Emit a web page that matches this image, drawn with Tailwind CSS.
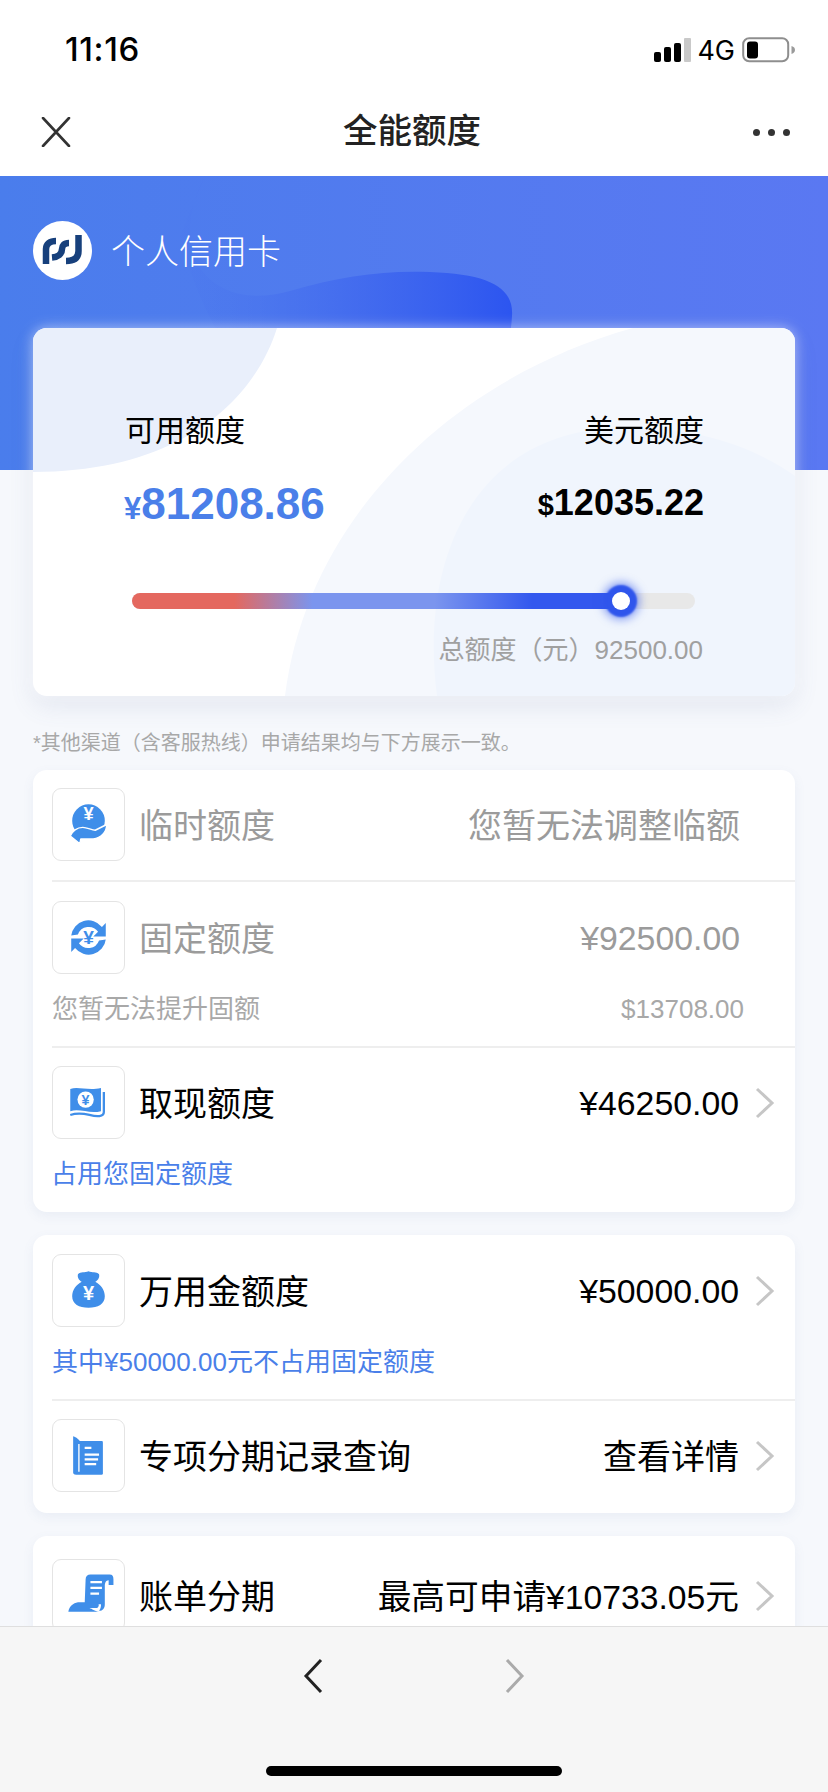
<!DOCTYPE html>
<html lang="zh-CN">
<head>
    <meta charset="UTF-8">
    <meta name="viewport" content="width=device-width, initial-scale=1.0">
    <title>全能额度</title>
    <script src="https://cdn.jsdelivr.net/npm/@tailwindcss/browser@4"></script>
</head>
<body class="bg-[#f6f8fc]">
<div class="relative w-[828px] h-[1792px] overflow-hidden bg-[#f6f8fc] text-[#111] font-['Liberation_Sans','Noto_Sans_CJK_SC',sans-serif]">

    <!-- status bar -->
    <div class="h-[88px] bg-white flex items-center justify-between pl-[65px] pr-[32px] pt-[12px]">
        <span class="text-[33px] font-medium tracking-[0.6px] text-black font-['Inter',sans-serif]">11:16</span>
        <div class="flex items-center">
            <svg width="37" height="24" viewBox="0 0 37 24" class="mr-[6px]">
                <rect x="0" y="14" width="7" height="10" rx="2" fill="#000"/>
                <rect x="10" y="9" width="7" height="15" rx="2" fill="#000"/>
                <rect x="20" y="5" width="7" height="19" rx="2" fill="#000"/>
                <rect x="30" y="0" width="7" height="24" rx="1" fill="#c9c9c9"/>
            </svg>
            <span class="text-[27px] leading-none text-black mr-[7px] font-['Inter',sans-serif]">4G</span>
            <svg width="54" height="26" viewBox="0 0 54 26">
                <rect x="1.2" y="1.2" width="45" height="23" rx="6" fill="none" stroke="#8e8e8e" stroke-width="2"/>
                <rect x="5" y="4.5" width="11" height="17" rx="3" fill="#000"/>
                <path d="M49.5 9c2.5.8 3.5 2.2 3.5 4s-1 3.2-3.5 4z" fill="#9a9a9a"/>
            </svg>
        </div>
    </div>

    <!-- nav -->
    <div class="relative h-[88px] bg-white flex items-center justify-between pl-[41px] pr-[38px]">
        <svg width="30" height="30" viewBox="0 0 30 30"><path d="M2 1l26 28M28 1L2 29" fill="none" stroke="#333" stroke-width="2.6" stroke-linecap="round"/></svg>
        <span class="text-[34.5px] font-medium text-[#222]">全能额度</span>
        <div class="flex gap-[8px]">
            <span class="w-[7px] h-[7px] rounded-full bg-[#333]"></span>
            <span class="w-[7px] h-[7px] rounded-full bg-[#333]"></span>
            <span class="w-[7px] h-[7px] rounded-full bg-[#333]"></span>
        </div>
    </div>

    <!-- hero -->
    <div class="relative">
        <div class="absolute inset-x-0 top-0 h-[294px] overflow-hidden bg-gradient-to-r from-[#4a7dec] to-[#5a78f2]">
            <svg width="828" height="294" viewBox="0 0 828 294" class="absolute left-0 top-0">
                <defs>
                    <linearGradient id="blob" x1="0" y1="0" x2="1" y2="0">
                        <stop offset="0" stop-color="#4a74ee" stop-opacity="0.1"/>
                        <stop offset="0.55" stop-color="#3c64ee" stop-opacity="0.7"/>
                        <stop offset="1" stop-color="#2c55f0"/>
                    </linearGradient>
                </defs>
                <path d="M205 0C186 34 186 72 200 92C218 118 252 126 290 115C340 100 385 94 430 96C490 98 514 112 512 140C511 156 509 166 505 180H230C215 150 195 120 180 60Z" fill="url(#blob)"/>
            </svg>
        </div>

        <div class="relative px-[33px]">
            <div class="flex items-center h-[152px]">
                <div class="w-[59px] h-[59px] -mt-[4px] rounded-full bg-white flex items-center justify-center">
                    <svg width="41" height="30" viewBox="0 0 41 30" fill="none" stroke="#17407c" stroke-width="6.500">
                        <path d="M4 29V14C4 9 8 6 14 6"/>
                        <path d="M27 8C22 8 20 11 20 14C20 19 16 22 10 22.500"/>
                        <path d="M36.500 0V16C36.500 23 32 26 24 26"/>
                    </svg>
                </div>
                <span class="ml-[19px] text-[34px] font-light text-white">个人信用卡</span>
            </div>

            <!-- quota card -->
            <div class="relative h-[368px] rounded-[14px] overflow-hidden bg-white shadow-[0_0_14px_rgba(255,255,255,0.55),0_10px_24px_rgba(90,110,160,0.12)]">
                <svg width="762" height="368" viewBox="0 0 762 368" class="absolute left-0 top-0">
                    <path d="M0 0H244C222 70 150 144 0 144Z" fill="#e9effb"/>
                    <path d="M252 368C274 190 420 50 600 0H762V368Z" fill="#f5f8fd"/>
                    <path d="M404 368C385 220 450 100 590 100C660 98 720 118 762 148V368Z" fill="#f0f5fd"/>
                </svg>
                <div class="relative pl-[92px] pr-[91px] pt-[81px]">
                    <div class="flex justify-between items-start">
                        <div>
                            <div class="text-[30px] leading-[44px] text-black">可用额度</div>
                            <div class="mt-[24px] h-[54px] flex items-baseline font-bold text-[#4a7fe9]">
                                <span class="text-[31px] -ml-[1px]">¥</span><span class="text-[44px] leading-[54px]">81208.86</span>
                            </div>
                        </div>
                        <div class="text-right">
                            <div class="text-[30px] leading-[44px] text-black">美元额度</div>
                            <div class="mt-[25px] h-[50px] flex items-baseline justify-end font-bold text-black">
                                <span class="text-[29px]">$</span><span class="text-[36px] leading-[50px]">12035.22</span>
                            </div>
                        </div>
                    </div>
                </div>
                <div class="absolute left-[99px] top-[265px] w-[563px] h-[16px] rounded-full bg-[#e8e8e8]">
                    <div class="h-full w-[488px] rounded-l-full bg-[linear-gradient(90deg,#e4685f_0%,#e4685f_21%,#7b95ee_37%,#7b95ee_62%,#3358ee_82%,#3358ee_100%)]"></div>
                    <div class="absolute left-[480px] top-[-1px] w-[18px] h-[18px] rounded-full bg-white shadow-[0_0_2px_7px_#2f55ec,0_0_9px_10px_rgba(47,85,236,0.5)]"></div>
                </div>
                <div class="absolute right-[92px] top-[304px] text-[26px] leading-[36px] text-[#a0a0a0]">总额度（元）92500.00</div>
            </div>

            <p class="mt-[28px] h-[38px] text-[20px] leading-[38px] text-[#a8a8a8]">*其他渠道（含客服热线）申请结果均与下方展示一致。</p>

            <!-- quota list -->
            <div class="mt-[8px] rounded-[14px] bg-white shadow-[0_4px_12px_rgba(90,110,160,0.08)]">
                <div class="ml-[19px] pt-[18px] pb-[19px] border-b-2 border-[#eeeeee]">
                    <div class="flex items-center">
                        <div class="w-[73px] h-[73px] rounded-[9px] border border-[#e4e4e4] flex items-center justify-center shrink-0">
                            <svg width="73" height="73" viewBox="0 0 74 74">
                                <circle cx="37" cy="33" r="17" fill="#3f8ee9"/>
                                <text x="37" y="32" text-anchor="middle" font-size="19" font-weight="700" fill="#fff" font-family="Liberation Sans">¥</text>
                                <path d="M18 49C20 44 25 40 31 40C36 40 40 43 44 43L56 37C56 45 50 51 42 52H29L28 57Z" fill="#3f8ee9" stroke="#fff" stroke-width="1.5" stroke-linejoin="round"/>
                            </svg>
                        </div>
                        <span class="ml-[14px] pt-[3px] text-[34px] text-[#9b9b9b]">临时额度</span>
                        <span class="ml-auto mr-[55px] pt-[3px] text-[34px] text-[#9b9b9b]">您暂无法调整临额</span>
                    </div>
                </div>
                <div class="ml-[19px] pt-[19px] pb-[19px] border-b-2 border-[#eeeeee]">
                    <div class="flex items-center">
                        <div class="w-[73px] h-[73px] rounded-[9px] border border-[#e4e4e4] flex items-center justify-center shrink-0">
                            <svg width="73" height="73" viewBox="0 0 74 74">
                                <path d="M19 35A18 18 0 0 1 51 26L55 22V36H42L47 31A12 12 0 0 0 26 34Z" fill="#3f8ee9"/>
                                <path d="M55 39A18 18 0 0 1 23 48L19 52V38H32L27 43A12 12 0 0 0 48 40Z" fill="#3f8ee9"/>
                                <text x="37" y="44" text-anchor="middle" font-size="20" font-weight="700" fill="#3f8ee9" font-family="Liberation Sans">¥</text>
                            </svg>
                        </div>
                        <span class="ml-[14px] pt-[3px] text-[34px] text-[#9b9b9b]">固定额度</span>
                        <span class="ml-auto mr-[55px] pt-[1px] text-[33.8px] text-[#9b9b9b]">¥92500.00</span>
                    </div>
                    <div class="mt-[17px] flex justify-between items-center h-[36px] pr-[51px] text-[26px] text-[#a8a8a8]">
                        <span>您暂无法提升固额</span><span>$13708.00</span>
                    </div>
                </div>
                <div class="pl-[19px] pt-[18px] pb-[20px]">
                    <div class="flex items-center">
                        <div class="w-[73px] h-[73px] rounded-[9px] border border-[#e4e4e4] flex items-center justify-center shrink-0">
                            <svg width="73" height="73" viewBox="0 0 74 74">
                                <path d="M18 23C26 20 36 25 50 22V46C38 49 28 43 18 46Z" fill="#3f8ee9"/>
                                <circle cx="34" cy="34" r="8.500" fill="#fff"/>
                                <text x="34" y="40" text-anchor="middle" font-size="15" font-weight="700" fill="#3f8ee9" font-family="Liberation Sans">¥</text>
                                <path d="M53 26V47C53 52 46 52 38 50C30 48 24 48 18 50" fill="none" stroke="#3f8ee9" stroke-width="2.400"/>
                            </svg>
                        </div>
                        <span class="ml-[14px] pt-[3px] text-[34px] text-black">取现额度</span>
                        <span class="ml-auto pt-[2px] text-[33.8px] text-black">¥46250.00</span>
                        <svg width="20" height="32" viewBox="0 0 20 32" class="ml-[16px] mr-[20px]"><path d="M2 2l15 14L2 30" fill="none" stroke="#c6c6c6" stroke-width="3"/></svg>
                    </div>
                    <div class="mt-[17px] h-[36px] -ml-[1px] text-[26px] leading-[36px] text-[#4a7fe9]">占用您固定额度</div>
                </div>
            </div>

            <div class="mt-[23px] rounded-[14px] bg-white shadow-[0_4px_12px_rgba(90,110,160,0.08)]">
                <div class="ml-[19px] pt-[19px] pb-[19px] border-b-2 border-[#eeeeee]">
                    <div class="flex items-center">
                        <div class="w-[73px] h-[73px] rounded-[9px] border border-[#e4e4e4] flex items-center justify-center shrink-0">
                            <svg width="73" height="73" viewBox="0 0 74 74">
                                <path d="M26 20C29 17 33 19 37 17C41 19 45 17 48 20C49 24 46 27 44 28C50 31 54 37 54 43C54 51 47 55 37 55C27 55 20 51 20 43C20 37 24 31 30 28C28 27 25 24 26 20Z" fill="#3f8ee9"/>
                                <text x="37" y="47" text-anchor="middle" font-size="21" font-weight="700" fill="#fff" font-family="Liberation Sans">¥</text>
                            </svg>
                        </div>
                        <span class="ml-[14px] pt-[3px] text-[34px] text-black">万用金额度</span>
                        <span class="ml-auto pt-[2px] text-[33.8px] text-black">¥50000.00</span>
                        <svg width="20" height="32" viewBox="0 0 20 32" class="ml-[16px] mr-[20px]"><path d="M2 2l15 14L2 30" fill="none" stroke="#c6c6c6" stroke-width="3"/></svg>
                    </div>
                    <div class="mt-[17px] h-[36px] text-[26px] leading-[36px] text-[#4a7fe9]">其中¥50000.00元不占用固定额度</div>
                </div>
                <div class="pl-[19px] pt-[18px] pb-[21px]">
                    <div class="flex items-center">
                        <div class="w-[73px] h-[73px] rounded-[9px] border border-[#e4e4e4] flex items-center justify-center shrink-0">
                            <svg width="73" height="73" viewBox="0 0 74 74">
                                <path d="M21 17C21 17 25 18 28 22H51C52 22 52 23 52 24V56C52 57 51 57 50 57H27C23 57 21 57 21 55Z" fill="#3f8ee9"/>
                                <path d="M27 25V54" stroke="#fff" stroke-width="1.400" fill="none"/>
                                <path d="M33 29H40M33 36H48M33 41H47M33 46H45" stroke="#fff" stroke-width="2.400" fill="none"/>
                            </svg>
                        </div>
                        <span class="ml-[14px] pt-[3px] text-[34px] text-black">专项分期记录查询</span>
                        <span class="ml-auto pt-[3px] text-[34px] text-black">查看详情</span>
                        <svg width="20" height="32" viewBox="0 0 20 32" class="ml-[16px] mr-[20px]"><path d="M2 2l15 14L2 30" fill="none" stroke="#c6c6c6" stroke-width="3"/></svg>
                    </div>
                </div>
            </div>

            <div class="mt-[23px] rounded-[14px] bg-white shadow-[0_4px_12px_rgba(90,110,160,0.08)]">
                <div class="pl-[19px] pt-[23px] pb-[20px]">
                    <div class="flex items-center">
                        <div class="w-[73px] h-[73px] rounded-[9px] border border-[#e4e4e4] flex items-center justify-center shrink-0">
                            <svg width="73" height="73" viewBox="0 0 74 74">
                                <path d="M34 20C34 17 36 15 39 15H59C62 15 63 17 63 20V26H58V21C55 21 54 24 54 27V46C54 50 52 53 48 53C50 50 50 48 50 46H33Z" fill="#3f8ee9"/>
                                <path d="M39 23H51M39 29H51M39 35H48" stroke="#fff" stroke-width="2.400" fill="none"/>
                                <path d="M16 54C17 48 21 45 26 44H44C48 44 49 48 46 50H38C41 51 43 53 48 54Z" fill="#3f8ee9"/>
                            </svg>
                        </div>
                        <span class="ml-[14px] pt-[3px] text-[34px] text-black">账单分期</span>
                        <span class="ml-auto pt-[3px] text-[33.7px] text-black">最高可申请¥10733.05元</span>
                        <svg width="20" height="32" viewBox="0 0 20 32" class="ml-[16px] mr-[20px]"><path d="M2 2l15 14L2 30" fill="none" stroke="#c6c6c6" stroke-width="3"/></svg>
                    </div>
                </div>
            </div>
        </div>
    </div>

    <!-- browser toolbar -->
    <div class="absolute inset-x-0 bottom-0 h-[166px] bg-[#f6f6f6] border-t border-[#dfdfdf]">
        <div class="flex items-center pl-[303px] pt-[31px]">
            <svg width="20" height="36" viewBox="0 0 20 36"><path d="M18 2L3 18l15 16" fill="none" stroke="#222" stroke-width="3"/></svg>
            <svg width="20" height="36" viewBox="0 0 20 36" class="ml-[182px]"><path d="M2 2l15 16L2 34" fill="none" stroke="#aaa" stroke-width="3"/></svg>
        </div>
        <div class="absolute left-[266px] bottom-[16px] w-[296px] h-[10px] rounded-full bg-black"></div>
    </div>
</div>
</body>
</html>
